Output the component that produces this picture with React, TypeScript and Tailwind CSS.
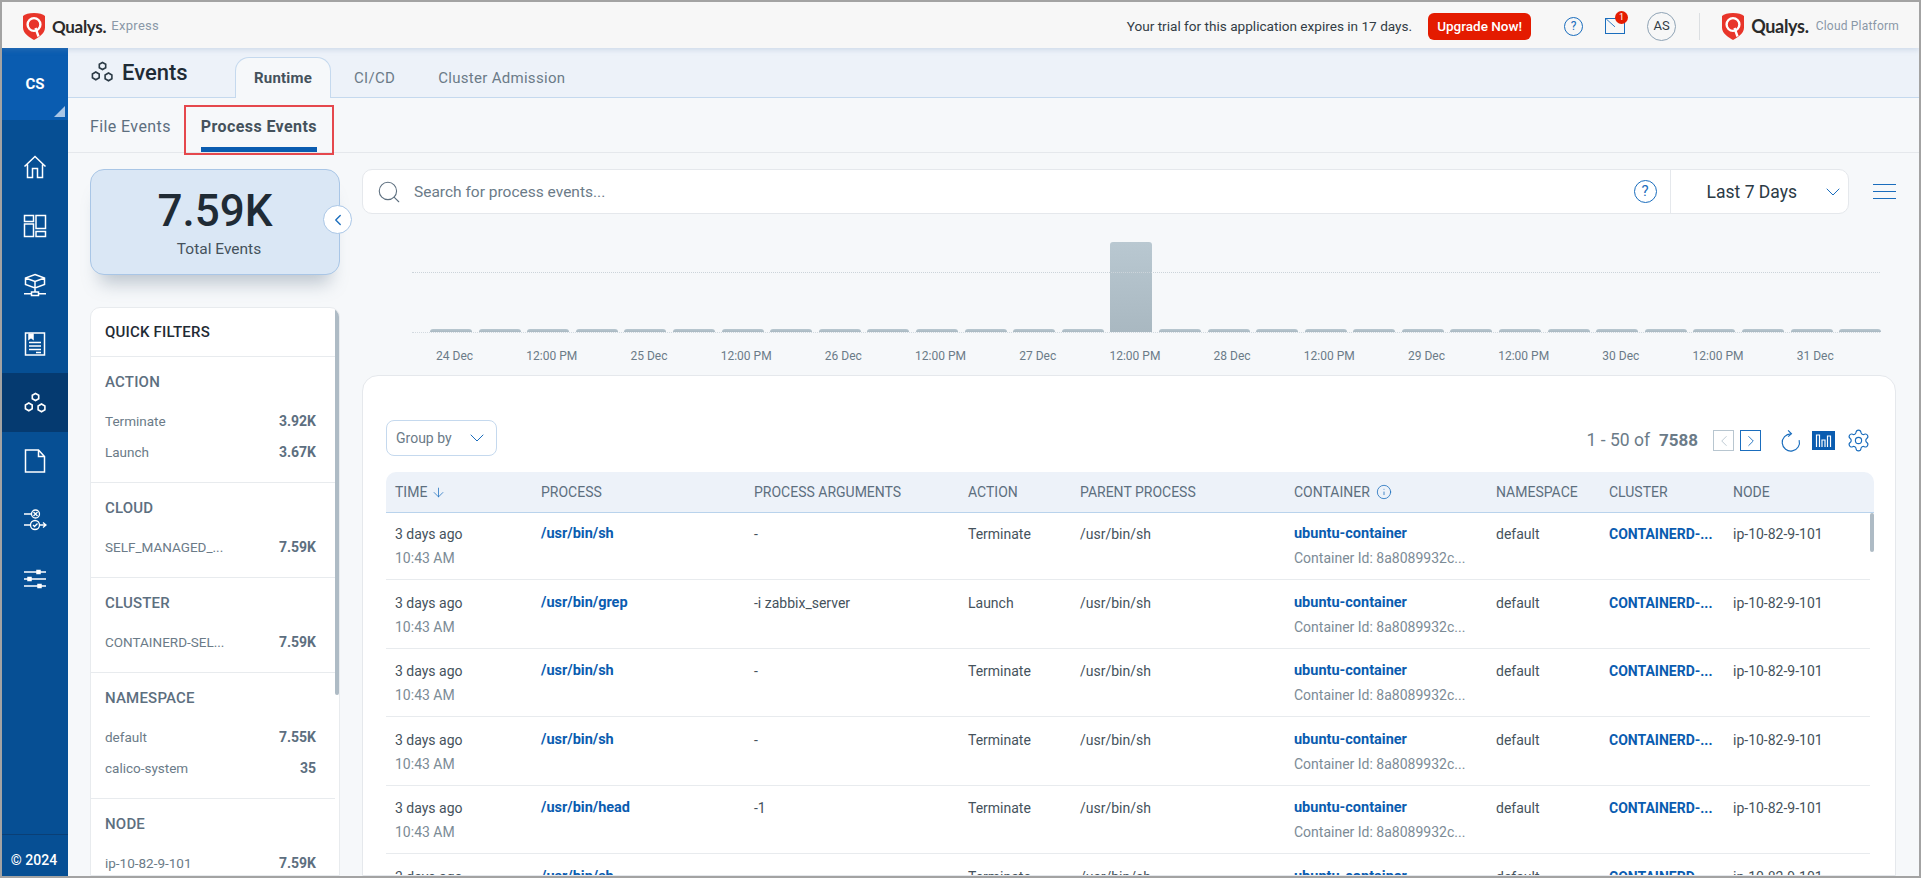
import { ChevronDown, ChevronLeft, ChevronRight, Info, Search, Settings, ArrowDown } from 'lucide-react'

const ROWS = [
  { process: '/usr/bin/sh', args: '-', action: 'Terminate' },
  { process: '/usr/bin/grep', args: '-i zabbix_server', action: 'Launch' },
  { process: '/usr/bin/sh', args: '-', action: 'Terminate' },
  { process: '/usr/bin/sh', args: '-', action: 'Terminate' },
  { process: '/usr/bin/head', args: '-1', action: 'Terminate' },
  { process: '/usr/bin/sh', args: '-', action: 'Terminate' },
]

const FILTERS = [
  { title: 'ACTION', items: [['Terminate', '3.92K'], ['Launch', '3.67K']] },
  { title: 'CLOUD', items: [['SELF_MANAGED_...', '7.59K']] },
  { title: 'CLUSTER', items: [['CONTAINERD-SEL...', '7.59K']] },
  { title: 'NAMESPACE', items: [['default', '7.55K'], ['calico-system', '35']] },
  { title: 'NODE', items: [['ip-10-82-9-101', '7.59K']] },
]

const LABELS = ['24 Dec', '12:00 PM', '25 Dec', '12:00 PM', '26 Dec', '12:00 PM', '27 Dec', '12:00 PM', '28 Dec', '12:00 PM', '29 Dec', '12:00 PM', '30 Dec', '12:00 PM', '31 Dec']

const BARS = Array.from({ length: 30 }, (_, i) => i)

const GRID = 'grid grid-cols-[146px_213px_214px_112px_214px_202px_113px_124px_1fr] pl-[9px]'

function QualysShield({ className }: { className: string }) {
  return (
    <svg viewBox="0 0 22 27" className={className}>
      <path d="M11 0C16 0 20 1.2 22 3V14.5C22 20.5 15.5 24.5 11 27C6.5 24.5 0 20.5 0 14.5V3C2 1.2 6 0 11 0Z" fill="#e8352a" />
      <circle cx="11" cy="11.5" r="6.4" fill="none" stroke="#fff" strokeWidth="2.4" />
      <path d="M12.5 15L15.5 23.5" stroke="#fff" strokeWidth="2.4" />
    </svg>
  )
}

function HexIcon({ className }: { className: string }) {
  return (
    <svg viewBox="0 0 24 24" fill="none" stroke="currentColor" strokeWidth="1.6" className={className}>
      <path d="M12.5 2.5l3.2 1.8v3.4l-3.2 1.8-3.2-1.8V4.3z" />
      <path d="M5.8 12l3.4 2v3.8l-3.4 2-3.4-2V14z" />
      <path d="M18.5 13l3.4 2v3.8l-3.4 2-3.4-2V15z" />
    </svg>
  )
}

function SideIcon({ name }: { name: string }) {
  const common = { viewBox: '0 0 24 24', fill: 'none', stroke: '#fff', strokeWidth: 1.5, className: 'w-[24px] h-[24px]' }
  if (name === 'home') {
    return (
      <svg {...common}>
        <path d="M1.5 11.5L12 1.5l10.5 10M4.5 9.5V22.5h5V13.5h5v9h5V9.5" />
      </svg>
    )
  }
  if (name === 'dash') {
    return (
      <svg {...common}>
        <rect x="1.5" y="1.5" width="9" height="6" />
        <rect x="1.5" y="10" width="9" height="12.5" />
        <rect x="13" y="1.5" width="9.5" height="13" />
        <rect x="13" y="17.5" width="9.5" height="5" />
      </svg>
    )
  }
  if (name === 'net') {
    return (
      <svg {...common}>
        <path d="M12 1.5l9.5 3.5v6.5L12 15 2.5 11.5V5zM2.5 5L12 8.5 21.5 5M12 8.5V19" />
        <rect x="8.5" y="19" width="7" height="3.5" />
        <path d="M1 20.75h7.5M15.5 20.75H23" />
      </svg>
    )
  }
  if (name === 'doc') {
    return (
      <svg {...common}>
        <rect x="2.5" y="1" width="19" height="22" />
        <path d="M6 1.5v5.5l2-1.5 2 1.5V1.5" fill="#fff" />
        <path d="M6 10.5h12M6 14h12M6 17.5h12M13 20.5h5" />
      </svg>
    )
  }
  if (name === 'file') {
    return (
      <svg {...common}>
        <path d="M2.5 1h13l6 6.5V23h-19zM15.5 1v6.5h6" />
      </svg>
    )
  }
  if (name === 'flow') {
    return (
      <svg {...common} strokeWidth={1.3}>
        <circle cx="12.5" cy="6" r="4" />
        <path d="M10.5 4l4 4M14.5 4l-4 4M1 6h7.5" />
        <circle cx="12" cy="17" r="4.5" />
        <path d="M10 17l1.5 1.5 3-3M1 17h6.5M16.5 17h6M20 14.5l3 2.5-3 2.5" />
      </svg>
    )
  }
  return (
    <svg {...common}>
      <path d="M1 5h22M1 12h22M1 19h22" />
      <rect x="14" y="3.5" width="3" height="3" fill="#fff" />
      <rect x="5" y="10.5" width="3" height="3" fill="#fff" />
      <rect x="15" y="17.5" width="3" height="3" fill="#fff" />
    </svg>
  )
}

function HelpCircle({ className }: { className: string }) {
  return (
    <div className={'flex items-center justify-center rounded-full border border-[#1a6dbd] text-[#1a6dbd] ' + className}>?</div>
  )
}

function TopBar() {
  return (
    <div className="h-[46px] shrink-0 flex items-center bg-[#f7f7f7] pt-[2px] pl-[21px] pr-[20px] relative z-10 shadow-[0_2px_5px_rgba(120,150,190,0.25)]">
      <QualysShield className="w-[22px] h-[27px]" />
      <span className="ml-[7px] text-[17px] font-bold text-[#2b2b2b] leading-none tracking-[-0.3px] font-['Lato',sans-serif]">Qualys.</span>
      <span className="ml-[5px] text-[13px] text-[#8a98a8] tracking-[0.3px]">Express</span>
      <span className="ml-auto text-[13.6px] text-[#333d45]">Your trial for this application expires in 17 days.</span>
      <button className="ml-[16px] w-[103px] h-[27px] rounded-[6px] bg-[#e41b00] text-white text-[13.5px] font-medium">Upgrade Now!</button>
      <HelpCircle className="ml-[33px] w-[19px] h-[19px] text-[12px]" />
      <div className="ml-[22px] relative w-[20px] h-[16px] border border-[#1a6dbd]">
        <svg viewBox="0 0 20 16" className="w-full h-full" fill="none" stroke="#1a6dbd"><path d="M0 0l10 9" /></svg>
        <span className="absolute -top-[8px] -right-[4px] w-[13px] h-[13px] rounded-full bg-[#e41b00] text-white text-[9px] leading-[13px] text-center">1</span>
      </div>
      <div className="ml-[22px] w-[29px] h-[29px] rounded-full border border-[#8fa3b5] flex items-center justify-center text-[13px] text-[#333d45]">AS</div>
      <div className="ml-[23px] w-px h-[27px] bg-[#dcdfe2]" />
      <QualysShield className="ml-[22px] w-[22px] h-[27px]" />
      <span className="ml-[7px] text-[18px] font-bold text-[#2b2b2b] leading-none tracking-[-0.3px] font-['Lato',sans-serif]">Qualys.</span>
      <span className="ml-[7px] text-[12px] text-[#8a98a8] tracking-[0.2px]">Cloud Platform</span>
    </div>
  )
}

function Sidebar() {
  const items = ['home', 'dash', 'net', 'doc', 'hex', 'file', 'flow', 'sliders']
  return (
    <div className="w-[66px] shrink-0 bg-[#064f94] flex flex-col">
      <div className="h-[72px] bg-[#0a5cb0] relative flex items-center justify-center text-white text-[15px] font-bold">
        CS
        <span className="absolute right-[3px] bottom-[3px] w-0 h-0 border-l-[11px] border-l-transparent border-b-[11px] border-b-[#a9c6e6]" />
      </div>
      <div className="flex flex-col pt-[18px]">
        {items.map(name => (
          <div key={name} className={'h-[58.8px] flex items-center justify-center ' + (name === 'hex' ? 'bg-[#053a70]' : '')}>
            {name === 'hex' ? <HexIcon className="w-[24px] h-[24px] text-white" /> : <SideIcon name={name} />}
          </div>
        ))}
      </div>
      <div className="mt-auto h-[42px] border-t border-[#0a3f75] flex items-center justify-center pt-[10px] pr-[2px] text-white text-[14px] font-medium">© 2024</div>
    </div>
  )
}

function FilterPanel() {
  return (
    <div className="mt-[32px] relative bg-white border border-[#e8ebee] rounded-t-[10px] flex-1 overflow-hidden pr-[4px]">
      <div className="h-[49px] flex items-center pl-[14px] pr-[19px] text-[15px] tracking-[0.2px] font-medium text-[#1f2b35] border-b border-[#e8ebee]">QUICK FILTERS</div>
      {FILTERS.map(group => (
        <div key={group.title} className="pl-[14px] pr-[19px] pt-[14px] pb-[19px] border-b border-[#e8ebee]">
          <div className="h-[22px] flex items-center text-[15px] tracking-[0.2px] font-medium text-[#5d6f7f]">{group.title}</div>
          <div className="mt-[17px] flex flex-col gap-[9px]">
            {group.items.map(([label, value]) => (
              <div key={label} className="h-[22px] flex items-center justify-between text-[13.5px] text-[#6b7b88]">
                <span>{label}</span>
                <span className="font-bold text-[14px] text-[#5d6f7f]">{value}</span>
              </div>
            ))}
          </div>
        </div>
      ))}
      <div className="absolute top-0 right-0 w-[4px] h-[387px] bg-[#aebbc5] rounded-full" />
    </div>
  )
}

function Chart() {
  return (
    <div className="h-[161px]">
      <div className="ml-[50px] mt-[29px] w-[1468px] h-[90px] relative border-b border-dotted border-[#d3dae0] flex items-end gap-[6.6px] pl-[18px]">
        <div className="absolute left-0 right-0 top-[29px] border-t border-dotted border-[#ccd4da]" />
        {BARS.map(i => (
          <div key={i} className={'w-[42px] shrink-0 rounded-t-[3px] bg-gradient-to-b from-[#b9c8d1] to-[#a9b8c1] ' + (i === 14 ? 'h-[90px]' : 'h-[3px]')} />
        ))}
      </div>
      <div className="ml-[44px] mt-[15px] grid grid-cols-[repeat(15,97.2px)] text-center text-[12px] leading-[16px] text-[#6b7b88]">
        {LABELS.map((label, i) => <span key={i}>{label}</span>)}
      </div>
    </div>
  )
}

function EventsTable() {
  return (
    <div className="flex-1 bg-white border border-[#e5e8ec] rounded-t-[16px] pl-[23px] pr-[21px] overflow-hidden">
      <div className="mt-[44px] h-[36px] flex items-center text-[#6b7b88]">
        <div className="w-[111px] h-[36px] border border-[#c5d9ee] rounded-[8px] flex items-center pl-[9px] text-[14px]">
          Group by
          <ChevronDown className="ml-auto mr-[7px] w-[24px] h-[24px] text-[#1a6dbd]" strokeWidth={1} />
        </div>
        <div className="ml-auto mr-[3px] mt-[5px] flex items-center">
          <span className="text-[17.5px]">1 - 50 of</span>
          <span className="ml-[9px] text-[17px] font-bold">7588</span>
          <div className="ml-[15px] w-[21px] h-[21px] border border-[#b8c6d0] flex items-center justify-center"><ChevronLeft className="w-[18px] h-[18px] text-[#b8c6d0]" strokeWidth={1.2} /></div>
          <div className="ml-[6px] w-[21px] h-[21px] border border-[#1a6dbd] flex items-center justify-center"><ChevronRight className="w-[18px] h-[18px] text-[#1a6dbd]" strokeWidth={1.2} /></div>
          <svg viewBox="0 0 24 24" fill="none" stroke="#1a6dbd" strokeWidth="1.2" className="ml-[18px] w-[23px] h-[26px]">
            <path d="M12.5 4.5A9 9 0 1 0 21 11" />
            <path d="M9.5 1l3.5 3.5-3.5 3" />
          </svg>
          <svg viewBox="0 0 23 19" className="ml-[10px] w-[23px] h-[19px]">
            <rect width="23" height="19" fill="#0a5cb0" />
            <path d="M4.5 16V4h3v12M10 16V9h3v7M15.5 16V5h3v11" fill="none" stroke="#fff" strokeWidth="1.2" />
          </svg>
          <Settings className="ml-[11px] w-[25px] h-[25px] text-[#1a6dbd]" strokeWidth={1.1} />
        </div>
      </div>
      <div className="mt-[16px] relative">
        <div className={GRID + ' h-[41px] items-center bg-[#edf2f9] border-b border-[#b9d3ec] rounded-t-[10px] text-[14px] text-[#5d6f7f]'}>
          <span className="flex items-center gap-[4px]">TIME <ArrowDown className="w-[15px] h-[15px] text-[#1a6dbd]" strokeWidth={1.2} /></span>
          <span>PROCESS</span>
          <span>PROCESS ARGUMENTS</span>
          <span>ACTION</span>
          <span>PARENT PROCESS</span>
          <span className="flex items-center gap-[6px]">CONTAINER <Info className="w-[16px] h-[16px] text-[#1a6dbd]" strokeWidth={1.2} /></span>
          <span>NAMESPACE</span>
          <span>CLUSTER</span>
          <span>NODE</span>
        </div>
        {ROWS.map((row, i) => (
          <div key={i} className={GRID + ' mr-[4px] leading-[24px] text-[14px] text-[#45525c] border-b border-[#e8ebee] ' + (i === 0 ? 'h-[67px] pt-[9px]' : 'h-[68.6px] pt-[10.5px]')}>
            <div>
              <div>3 days ago</div>
              <div className="text-[#7c8b96]">10:43 AM</div>
            </div>
            <div className="font-bold text-[14.5px] text-[#0a5cb0]">{row.process}</div>
            <div>{row.args}</div>
            <div>{row.action}</div>
            <div>/usr/bin/sh</div>
            <div>
              <div className="font-bold text-[14.5px] text-[#0a5cb0]">ubuntu-container</div>
              <div className="text-[#7c8b96]">Container Id: 8a8089932c...</div>
            </div>
            <div>default</div>
            <div className="font-bold text-[#0a5cb0]">CONTAINERD-...</div>
            <div>ip-10-82-9-101</div>
          </div>
        ))}
        <div className="absolute right-0 top-[41px] w-[4px] h-[39px] bg-[#aebbc5] rounded-full" />
      </div>
    </div>
  )
}

export default function App() {
  return (
    <div className="w-[1921px] h-[878px] border-2 border-[#a3a3a3] overflow-hidden flex flex-col bg-[#f6f8fa] font-['Roboto',sans-serif]">
      <TopBar />
      <div className="flex flex-1 min-h-0">
        <Sidebar />
        <div className="flex-1 min-w-0 flex flex-col">
          <div className="h-[50px] shrink-0 bg-[#edf2f9] border-b border-[#c5d9ee] flex items-end pl-[22px]">
            <div className="w-[145px] self-start h-[48px] flex items-center gap-[8px] text-[22px] font-medium text-[#1f2b35]">
              <HexIcon className="w-[24px] h-[24px] text-[#2b3a45]" />
              Events
            </div>
            <div className="w-[96px] h-[41px] -mb-px bg-[#f6f8fa] border border-b-0 border-[#c5d9ee] rounded-t-[14px] flex items-center justify-center text-[15px] font-bold text-[#45525c] tracking-[0.2px]">Runtime</div>
            <div className="h-[40px] pt-[3px] ml-[23px] flex items-center text-[15px] text-[#6b7b88] tracking-[0.3px]">CI/CD</div>
            <div className="h-[40px] pt-[3px] ml-[43px] flex items-center text-[15px] text-[#6b7b88] tracking-[0.3px]">Cluster Admission</div>
          </div>
          <div className="h-[55px] shrink-0 border-b border-[#e5e8ec] flex pl-[22px] text-[16px] tracking-[0.4px]">
            <div className="h-[54px] flex items-center pt-[4px] text-[#5d6f7f]">File Events</div>
            <div className="ml-[30px] h-[54px] relative flex items-center pt-[9px] font-bold text-[#45525c] border-b-[5px] border-[#0a5cb0]">
              <span>Process Events</span>
              <div className="absolute -left-[17px] -right-[17px] top-[7px] h-[50px] border-2 border-[#e5484d]" />
            </div>
          </div>
          <div className="flex-1 min-h-0 flex pl-[22px]">
            <div className="w-[250px] shrink-0 flex flex-col pt-[16px]">
              <div className="h-[106px] shrink-0 relative bg-[#dae7f5] border border-[#a9c6e6] rounded-[14px] shadow-[0_18px_18px_-10px_rgba(100,120,140,0.4)] flex flex-col items-center text-center">
                <div className="mt-[13px] h-[56px] flex items-center text-[44px] font-medium text-[#1f2b35] leading-none">7.59K</div>
                <div className="-mt-[1px] ml-[8px] text-[15.5px] text-[#45525c]">Total Events</div>
                <div className="absolute -right-[13px] top-[35px] w-[29px] h-[29px] rounded-full bg-white border border-[#a9c6e6] flex items-center justify-center">
                  <ChevronLeft className="w-[18px] h-[18px] text-[#1a6dbd]" strokeWidth={1.8} />
                </div>
              </div>
              <FilterPanel />
            </div>
            <div className="w-[1534px] shrink-0 ml-[22px] pt-[16px] flex flex-col">
              <div className="h-[45px] shrink-0 flex items-center">
                <div className="w-[1488px] h-[45px] bg-white border border-[#e5e8ec] rounded-[10px] flex items-center pl-[13px]">
                  <Search className="w-[26px] h-[26px] text-[#5d6f7f]" strokeWidth={1} />
                  <span className="ml-[12px] mt-[2px] text-[15.5px] text-[#6b7b88]">Search for process events...</span>
                  <HelpCircle className="ml-auto w-[23px] h-[23px] text-[15px]" />
                  <div className="ml-[13px] w-px h-full bg-[#e5e8ec]" />
                  <span className="ml-[36px] mt-[2px] text-[17.5px] text-[#2b3a45]">Last 7 Days</span>
                  <ChevronDown className="ml-[24px] mr-[3px] w-[24px] h-[24px] text-[#1a6dbd]" strokeWidth={1} />
                </div>
                <div className="ml-[24px] w-[23px] flex flex-col gap-[6px]">
                  <div className="h-px bg-[#1a6dbd]" />
                  <div className="h-px bg-[#1a6dbd]" />
                  <div className="h-px bg-[#1a6dbd]" />
                </div>
              </div>
              <Chart />
              <EventsTable />
            </div>
          </div>
        </div>
      </div>
    </div>
  )
}
